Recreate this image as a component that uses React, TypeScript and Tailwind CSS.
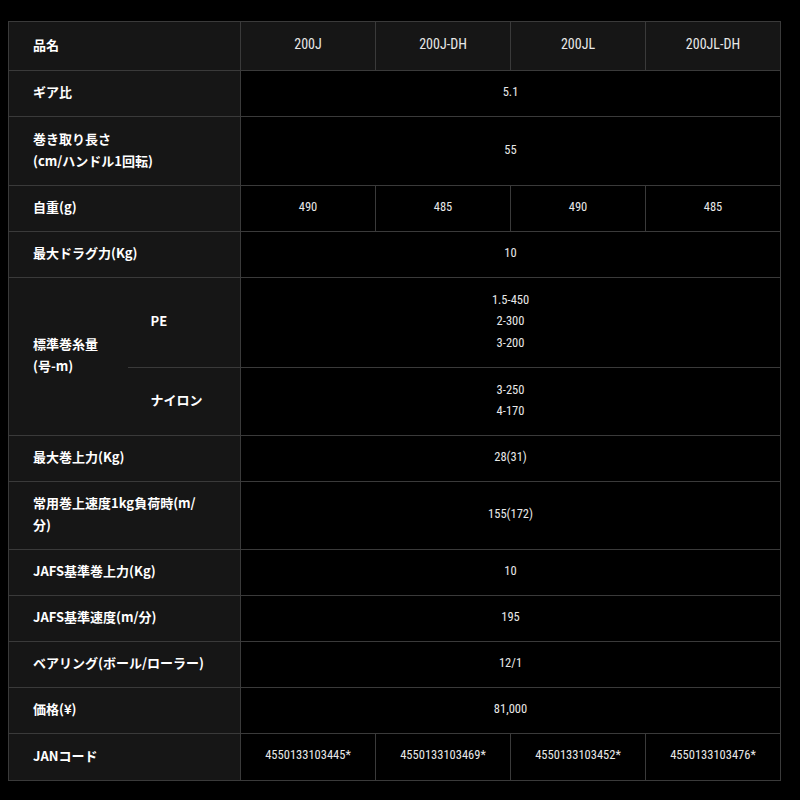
import React from 'react'

const label = "font-['Noto_Sans_CJK_JP',sans-serif] font-bold text-[13px] text-white pb-[3px]"
const num = "font-['Roboto_Condensed',sans-serif] text-[#e8e8e8] text-center pb-[3px]"
const bd = 'border border-[#3a3a3a]'

function Row({ name, h, children }: { name: React.ReactNode; h: number; children: React.ReactNode }) {
  return (
    <tr style={{ height: h }}>
      <td colSpan={2} className={`${bd} bg-[#161616] pl-[24px] pr-2 leading-[22px] ${label}`}>{name}</td>
      {children}
    </tr>
  )
}

function Span({ v }: { v: React.ReactNode }) {
  return <td colSpan={4} className={`${bd} bg-black text-[12.5px] leading-[21.5px] ${num}`}>{v}</td>
}

function Four({ vs }: { vs: string[] }) {
  return (
    <>
      {vs.map((v, i) => (
        <td key={i} className={`${bd} bg-black text-[12.5px] ${num}`}>{v}</td>
      ))}
    </>
  )
}

export default function App() {
  return (
    <div className="min-h-[800px] w-[800px] bg-black pl-[8px] pt-[21px]">
      <table className="table-fixed border-collapse w-[772px]">
        <colgroup>
          <col className="w-[119px]" />
          <col className="w-[113px]" />
          <col className="w-[135px]" />
          <col className="w-[135px]" />
          <col className="w-[135px]" />
          <col className="w-[135px]" />
        </colgroup>
        <tbody>
          <tr style={{ height: 49 }}>
            <td colSpan={2} className={`${bd} bg-[#161616] pl-[24px] ${label}`}>品名</td>
            {['200J', '200J-DH', '200JL', '200JL-DH'].map((h) => (
              <td key={h} className={`${bd} bg-[#161616] text-[14px] ${num} text-[#dcdcdc]`}>{h}</td>
            ))}
          </tr>
          <Row name="ギア比" h={46}><Span v="5.1" /></Row>
          <Row name={<>巻き取り長さ<br />(cm/ハンドル1回転)</>} h={69}><Span v="55" /></Row>
          <Row name="自重(g)" h={46}><Four vs={['490', '485', '490', '485']} /></Row>
          <Row name="最大ドラグ力(Kg)" h={46}><Span v="10" /></Row>
          <tr style={{ height: 90 }}>
            <td rowSpan={2} className={`border-y border-l border-[#3a3a3a] bg-[#161616] pl-[24px] leading-[22px] ${label}`}>
              標準巻糸量<br />(号-m)
            </td>
            <td className={`border-y border-r border-[#3a3a3a] bg-[#161616] pl-[23px] ${label}`}>PE</td>
            <Span v={<>1.5-450<br />2-300<br />3-200</>} />
          </tr>
          <tr style={{ height: 68 }}>
            <td className={`border-y border-r border-[#3a3a3a] bg-[#161616] pl-[23px] ${label}`}>ナイロン</td>
            <Span v={<>3-250<br />4-170</>} />
          </tr>
          <Row name="最大巻上力(Kg)" h={46}><Span v="28(31)" /></Row>
          <Row name={<>常用巻上速度1kg負荷時(m/<br />分)</>} h={68}><Span v="155(172)" /></Row>
          <Row name="JAFS基準巻上力(Kg)" h={46}><Span v="10" /></Row>
          <Row name="JAFS基準速度(m/分)" h={46}><Span v="195" /></Row>
          <Row name="ベアリング(ボール/ローラー)" h={46}><Span v="12/1" /></Row>
          <Row name="価格(¥)" h={46}><Span v="81,000" /></Row>
          <Row name="JANコード" h={47}>
            <Four vs={['4550133103445*', '4550133103469*', '4550133103452*', '4550133103476*']} />
          </Row>
        </tbody>
      </table>
    </div>
  )
}
